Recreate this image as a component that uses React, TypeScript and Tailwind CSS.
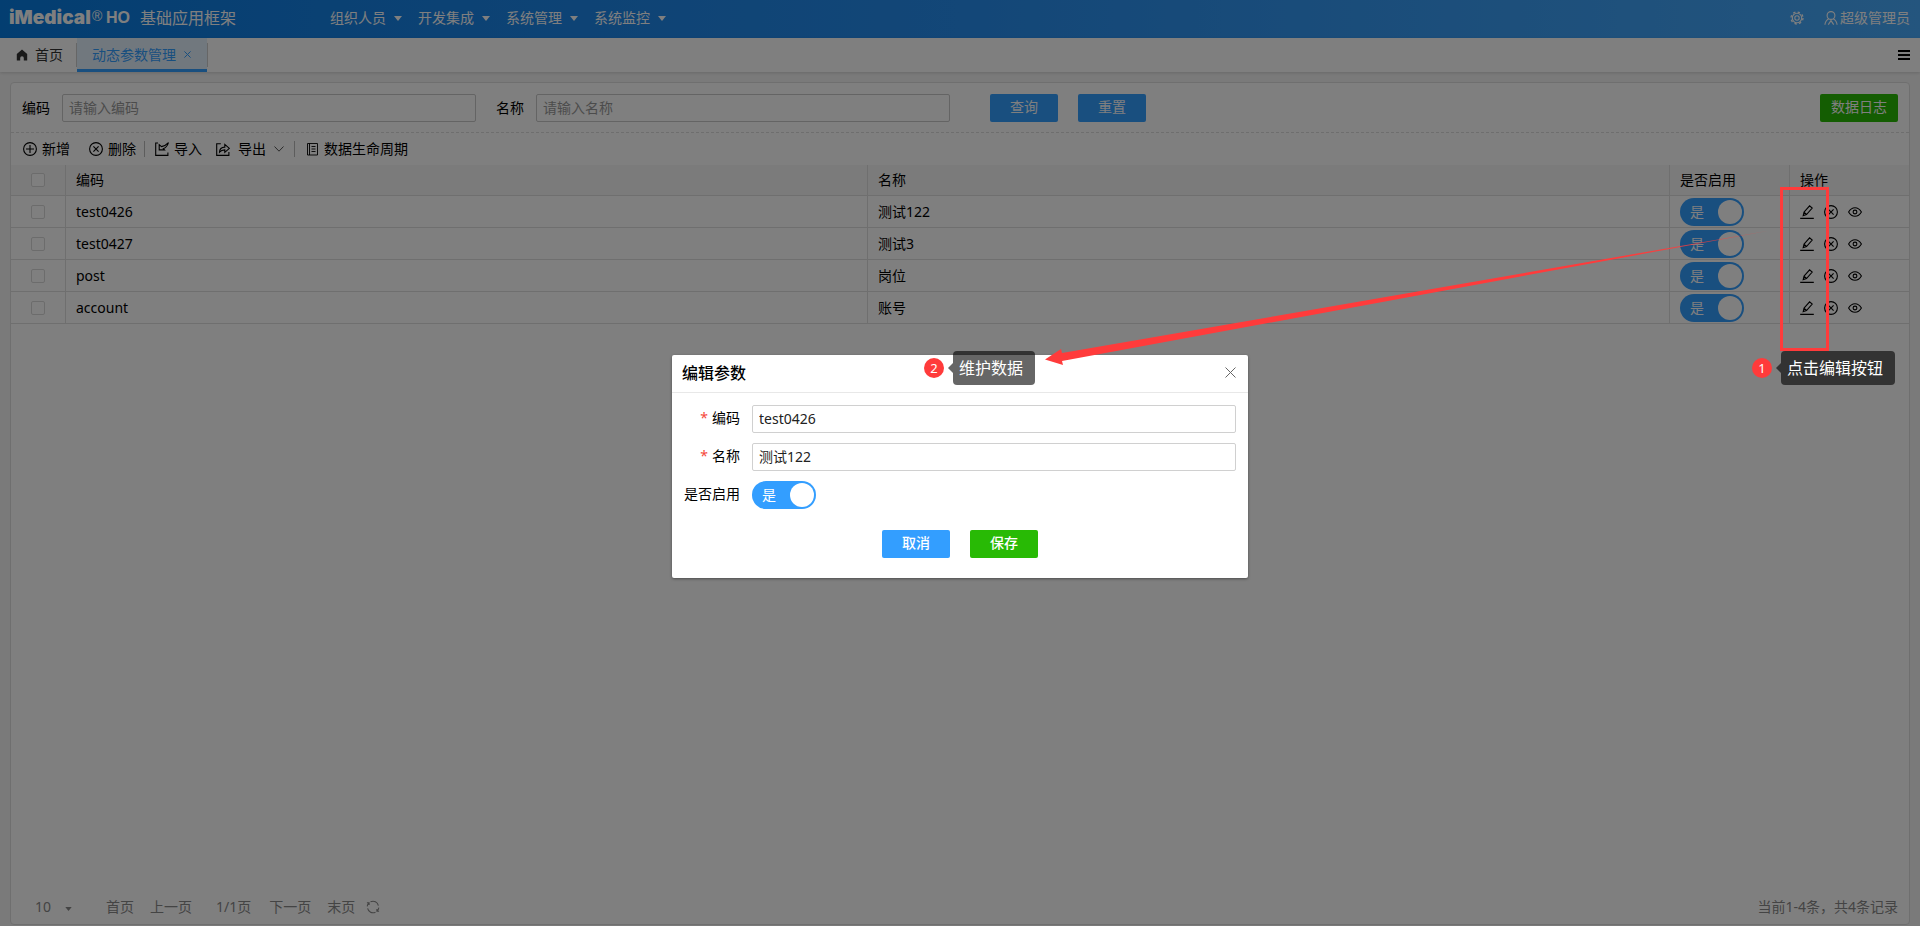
import { useState } from "react";
import type { ReactNode } from "react";

type Row = { code: string; name: string };

const rows: Row[] = [
  { code: "test0426", name: "测试122" },
  { code: "test0427", name: "测试3" },
  { code: "post", name: "岗位" },
  { code: "account", name: "账号" },
];

const menus = ["组织人员", "开发集成", "系统管理", "系统监控"];

function Icon({ children, className = "size-3.5" }: { children: ReactNode; className?: string }) {
  return (
    <svg viewBox="0 0 14 14" fill="none" stroke="currentColor" strokeWidth="1.1" className={`shrink-0 ${className}`} aria-hidden="true">
      {children}
    </svg>
  );
}

const CirclePlus = () => (
  <Icon>
    <circle cx="7" cy="7" r="6.4" />
    <path d="M7 3v8M3 7h8" />
  </Icon>
);

const CircleX = () => (
  <Icon>
    <circle cx="7" cy="7" r="6.4" />
    <path d="M4.4 4.4l5.2 5.2M9.6 4.4L4.4 9.6" />
  </Icon>
);

const ImportIcon = () => (
  <Icon>
    <path d="M3 1H.7v12.400h12.200V10.500" />
    <path d="M4.200 2.600v5.300h5.300L8.300 6.700C11 5.700 12.600 3.400 13.500.6 11.500 2.800 9 4 6.500 4.600z" />
  </Icon>
);

const ExportIcon = () => (
  <Icon>
    <path d="M4.800 1.800H.7v11.600h12.200V10" />
    <path d="M3.500 10.200c.1-3 1.800-5 5.300-5.100V2.400l4.600 4-4.600 4V7.900c-2.400 0-4 .7-5.300 2.300z" />
  </Icon>
);

const BookIcon = () => (
  <svg viewBox="0 0 11 13" className="h-[13px] w-[11px] shrink-0" fill="none" stroke="currentColor" strokeWidth="0.9" aria-hidden="true">
    <path d="M.5.5h10v11.500H.5zM2.500.5v11.500M4.500 3.500h4M4.500 6h4M4.500 8.500h4" />
  </svg>
);

const PencilIcon = () => (
  <Icon>
    <path d="M.2 13.400h13.600M4 7.200L9.600.8l2.600 2.200-5.700 6.500-3.300 1.100zM4 7.200l2.500 2.300" />
  </Icon>
);

const EyeIcon = () => (
  <Icon>
    <path d="M.6 7C2.200 4.200 4.400 2.700 7 2.700S11.800 4.200 13.400 7C11.800 9.800 9.600 11.300 7 11.300S2.200 9.800.6 7z" />
    <circle cx="7" cy="7" r="1.900" />
  </Icon>
);

const CaretDown = ({ className = "h-[5px] w-2" }: { className?: string }) => (
  <svg viewBox="0 0 8 5" className={`shrink-0 ${className}`} fill="currentColor" aria-hidden="true">
    <path d="M0 0h8L4 5z" />
  </svg>
);

function Switch({ label, id }: { label: string; id?: string }) {
  return (
    <label className="relative flex h-7 w-16 cursor-pointer items-center justify-between rounded-full bg-[#339eff] pr-0.5 pl-2.5 text-white">
      <input id={id} type="checkbox" role="switch" defaultChecked aria-label={label} className="absolute inset-0 appearance-none" />
      <span>是</span>
      <span className="size-6 rounded-full bg-white" />
    </label>
  );
}

function Check({ label }: { label: string }) {
  return (
    <input
      type="checkbox"
      aria-label={label}
      className="mx-auto block size-3.5 appearance-none rounded-xs border border-[#d9d9d9] bg-white"
    />
  );
}

function Header() {
  return (
    <header className="flex h-[38px] items-center bg-linear-to-r from-[#077ce2] via-[#268ef0] to-[#48abfc] pb-0.5 text-white">
      <div className="flex w-[330px] items-center pl-[9px]">
        <span className="flex w-[131px] items-center font-['Liberation_Sans']">
          <span className="w-[83px] font-[Inter] text-[19px] leading-5 font-black">iMedical</span>
          <span className="mb-1 w-3.5 text-sm leading-4">®</span>
          <span className="text-base leading-5 font-bold">HO</span>
        </span>
        <span className="text-base leading-5">基础应用框架</span>
      </div>
      <nav className="flex gap-4">
        {menus.map((m) => (
          <button key={m} type="button" className="flex items-center gap-2">
            {m}
            <CaretDown />
          </button>
        ))}
      </nav>
      <div className="ml-auto flex items-center gap-5 pr-2.5">
        <button type="button" aria-label="设置">
          <Icon>
            <circle cx="7" cy="7" r="4.700" />
            <circle cx="7" cy="7" r="6" strokeDasharray="2.356 2.356" strokeWidth="1.300" />
            <circle cx="7" cy="7" r="2.200" />
          </Icon>
        </button>
        <button type="button" className="flex items-center gap-0.5">
          <Icon>
            <circle cx="7" cy="4.500" r="3.900" />
            <path d="M4.700 7.700C2.600 8.900 1.200 10.800.9 13.800M9.300 7.700c2.100 1.200 3.500 3.100 3.800 6.100M4.300 13.600L7 9.600l2.700 4" />
          </Icon>
          超级管理员
        </button>
      </div>
    </header>
  );
}

function TabBar() {
  return (
    <div className="flex h-[34px] items-stretch bg-white shadow-[0_1px_3px_rgba(0,0,0,0.15)]">
      <button type="button" className="flex items-center gap-[7px] pr-[13px] pl-4 text-[#333]">
        <svg viewBox="0 0 12 12" className="size-3" fill="currentColor" aria-hidden="true">
          <path d="M6 .5L11.200 5V11.500H7.800V9a1.800 1.800 0 0 0-3.600 0v2.500H.8V5z" />
        </svg>
        首页
      </button>
      <span className="h-6 w-px self-center bg-[#ccc]" />
      <div className="flex items-center gap-2 border-b-3 border-[#339eff] bg-[#e3f1fc] pt-0.5 pr-4 pl-[15px] text-[#339eff]">
        <button type="button">动态参数管理</button>
        <button type="button" aria-label="关闭">
          <svg viewBox="0 0 7 7" className="size-[7px]" stroke="currentColor" aria-hidden="true">
            <path d="M.4.4l6.200 6.200M6.600.4L.4 6.600" />
          </svg>
        </button>
      </div>
      <span className="h-6 w-px self-center bg-[#ccc]" />
      <button type="button" aria-label="菜单" className="mr-2.5 ml-auto">
        <svg viewBox="0 0 12 10" className="h-2.5 w-3" fill="black" aria-hidden="true">
          <path d="M0 0h12v2H0zM0 4h12v2H0zM0 8h12v2H0z" />
        </svg>
      </button>
    </div>
  );
}

const inputClass =
  "h-7 w-full min-w-0 rounded-xs border border-[#c8c8c8] bg-white px-1.5 pb-0.5 outline-none placeholder:text-[#999]";

function SearchBar() {
  return (
    <form className="flex items-center border-b border-dashed border-[#dcdcdc] px-[11px] pt-[11px] pb-2.5" onSubmit={(e) => e.preventDefault()}>
      <div className="grid basis-1/2 grid-cols-2 gap-5 pr-2.5">
        <label className="flex items-center gap-3 whitespace-nowrap">
          编码
          <input className={inputClass} placeholder="请输入编码" />
        </label>
        <label className="flex items-center gap-3 whitespace-nowrap">
          名称
          <input className={inputClass} placeholder="请输入名称" />
        </label>
      </div>
      <div className="ml-[30px] flex gap-5">
        <button type="submit" className="h-7 w-[68px] rounded-xs bg-[#339eff] pb-0.5 text-white">
          查询
        </button>
        <button type="reset" className="h-7 w-[68px] rounded-xs bg-[#339eff] pb-0.5 text-white">
          重置
        </button>
      </div>
      <button type="button" className="ml-auto h-7 rounded-xs bg-[#28ba05] px-[11px] pb-0.5 text-white">
        数据日志
      </button>
    </form>
  );
}

function Toolbar() {
  return (
    <div className="flex h-8 items-center pl-3">
      <button type="button" className="flex items-center gap-[5px]">
        <CirclePlus />
        新增
      </button>
      <button type="button" className="ml-[19px] flex items-center gap-[5px]">
        <CircleX />
        删除
      </button>
      <span className="ml-2 h-4 w-px bg-[#bbb]" />
      <button type="button" className="ml-2.5 flex items-center gap-[5px]">
        <ImportIcon />
        导入
      </button>
      <button type="button" className="ml-3.5 flex items-center gap-2">
        <ExportIcon />
        导出
        <svg viewBox="0 0 10 6" className="h-1.5 w-2.5 text-[#555]" fill="none" stroke="currentColor" aria-hidden="true">
          <path d="M.5.500L5 5.200 9.500.5" />
        </svg>
      </button>
      <span className="ml-2.5 h-4 w-px bg-[#bbb]" />
      <button type="button" className="ml-3 flex items-center gap-1.5">
        <BookIcon />
        数据生命周期
      </button>
    </div>
  );
}

function ParamTable() {
  const head = "border-r border-b border-[#dedede] px-2.5 text-left font-normal last:border-r-0";
  const cell = "border-r border-b border-[#dedede] px-2.5 last:border-r-0";
  return (
    <table className="w-full table-fixed border-separate border-spacing-0">
      <colgroup>
        <col className="w-[55px]" />
        <col />
        <col />
        <col className="w-[120px]" />
        <col className="w-[119px]" />
      </colgroup>
      <thead>
        <tr className="h-[31px] bg-[#f7f7f7]">
          <th className={head}>
            <Check label="全选" />
          </th>
          <th className={head}>编码</th>
          <th className={head}>名称</th>
          <th className={head}>是否启用</th>
          <th className={head}>操作</th>
        </tr>
      </thead>
      <tbody>
        {rows.map((r) => (
          <tr key={r.code} className="h-8">
            <td className={cell}>
              <Check label={r.code} />
            </td>
            <td className={cell}>{r.code}</td>
            <td className={cell}>{r.name}</td>
            <td className={cell}>
              <Switch label={`${r.name} 是否启用`} />
            </td>
            <td className={cell}>
              <div className="flex gap-2.5">
                <button type="button" aria-label="编辑">
                  <PencilIcon />
                </button>
                <button type="button" aria-label="删除">
                  <CircleX />
                </button>
                <button type="button" aria-label="查看">
                  <EyeIcon />
                </button>
              </div>
            </td>
          </tr>
        ))}
      </tbody>
    </table>
  );
}

function Pagination() {
  return (
    <footer className="mt-auto flex h-8 items-center pr-[11px] pb-0.5 pl-6 text-[#888]">
      <div className="relative flex w-[41px] items-center">
        <select aria-label="每页条数" className="w-full appearance-none bg-transparent" defaultValue="10">
          <option>10</option>
          <option>20</option>
          <option>50</option>
        </select>
        <CaretDown className="pointer-events-none absolute top-2.5 right-1 h-1 w-[7px]" />
      </div>
      <button type="button" className="ml-[30px]">首页</button>
      <button type="button" className="ml-4">上一页</button>
      <span className="ml-6">1/1页</span>
      <button type="button" className="ml-[18px]">下一页</button>
      <button type="button" className="ml-4">末页</button>
      <button type="button" aria-label="刷新" className="ml-[11px]">
        <Icon>
          <path d="M4.500 1.800C8 .3 11.500 2 12.400 5.600M12.800 7.600c-.2 1.300-.7 2.400-1.500 3.200M9.500 12.200C6 13.700 2.500 12 1.600 8.400M1.200 6.400c.2-1.300.7-2.400 1.500-3.200M.9 2.700h2.200v2.200M13.100 11.300h-2.200V9.100" />
        </Icon>
      </button>
      <span className="ml-auto">当前1-4条，共4条记录</span>
    </footer>
  );
}

function EditDialog() {
  const [code, setCode] = useState("test0426");
  const [name, setName] = useState("测试122");
  const labelClass = "w-20 shrink-0 pr-3 pb-0.5 text-right whitespace-nowrap";
  const field = "h-7 w-full min-w-0 rounded-xs border border-[#d0d0d0] bg-white px-1.5 pb-0.5 text-[#222] outline-none";
  return (
    <section role="dialog" aria-modal="true" aria-labelledby="dlg-title" className="w-[30%] min-w-96 rounded-xs bg-white shadow-[0_1px_3px_rgba(0,0,0,0.4)]">
      <div className="flex h-[38px] items-center justify-between border-b border-[#e8e8e8] pr-3 pb-0.5 pl-2.5">
        <h2 id="dlg-title" className="text-base font-medium">
          编辑参数
        </h2>
        <button type="button" aria-label="关闭">
          <svg viewBox="0 0 11 11" className="size-[11px]" stroke="#666" aria-hidden="true">
            <path d="M.5.500l10 10M10.500.5l-10 10" />
          </svg>
        </button>
      </div>
      <form className="flex flex-col gap-2.5 pt-3 pr-3 pb-5" onSubmit={(e) => e.preventDefault()}>
        <div className="flex items-center">
          <label htmlFor="f-code" className={labelClass}>
            <span className="mr-1 text-[#f5483b]">*</span>编码
          </label>
          <input id="f-code" className={field} value={code} onChange={(e) => setCode(e.target.value)} />
        </div>
        <div className="flex items-center">
          <label htmlFor="f-name" className={labelClass}>
            <span className="mr-1 text-[#f5483b]">*</span>名称
          </label>
          <input id="f-name" className={field} value={name} onChange={(e) => setName(e.target.value)} />
        </div>
        <div className="flex items-center">
          <label htmlFor="f-on" className={labelClass}>
            是否启用
          </label>
          <Switch id="f-on" label="是否启用" />
        </div>
        <div className="mt-[11px] flex justify-center gap-5 pl-3 font-medium text-white">
          <button type="button" className="h-7 w-[68px] rounded-xs bg-[#339eff] pb-0.5">
            取消
          </button>
          <button type="submit" className="h-7 w-[68px] rounded-xs bg-[#28ba05] pb-0.5">
            保存
          </button>
        </div>
      </form>
    </section>
  );
}

function Callout({ n, text, place }: { n: number; text: string; place: string }) {
  return (
    <div className={`absolute flex items-center text-white ${place}`}>
      <span className="flex size-5 items-center justify-center rounded-full bg-[#ff3b3b] text-[13px]">{n}</span>
      <svg viewBox="0 0 5 10" className="ml-1 h-2.5 w-[5px]" fill="black" fillOpacity="0.6" aria-hidden="true">
        <path d="M5 0v10L0 5z" />
      </svg>
      <span className="rounded-sm bg-black/60 py-[5px] pr-3 pl-1.5 text-base leading-6 whitespace-nowrap">{text}</span>
    </div>
  );
}

function Annotations() {
  return (
    <div className="pointer-events-none absolute inset-0 overflow-hidden">
      <svg className="absolute top-0 left-0" width="1920" height="400" aria-hidden="true">
        <defs>
          <linearGradient id="tail" x1="0" x2="1">
            <stop offset="0.8" stopColor="#ff3b3b" />
            <stop offset="1" stopColor="#ff3b3b" stopOpacity="0.5" />
          </linearGradient>
        </defs>
        <path d="M1045 359.500L1061 349L1062 353L1770 230.500L1062 361L1063 365Z" fill="url(#tail)" />
      </svg>
      <div className="absolute top-[187px] left-[1780px] h-[164px] w-[49px] border-3 border-[#ff3b3b]" />
      <Callout n={1} text="点击编辑按钮" place="top-[351px] left-[1752px]" />
      <Callout n={2} text="维护数据" place="top-[351px] left-[924px]" />
    </div>
  );
}

export default function App() {
  return (
    <div className="relative flex min-h-screen flex-col bg-[#f5f5f5] font-['Noto_Sans','Noto_Sans_CJK_SC',sans-serif] text-sm leading-5 text-black">
      <Header />
      <TabBar />
      <main className="mx-2.5 mt-2.5 mb-px flex flex-1 flex-col rounded border border-[#dedede] bg-white">
        <SearchBar />
        <Toolbar />
        <ParamTable />
        <Pagination />
      </main>
      <div className="absolute inset-0 flex items-center justify-center bg-black/50 pt-[7px]">
        <EditDialog />
      </div>
      <Annotations />
    </div>
  );
}
